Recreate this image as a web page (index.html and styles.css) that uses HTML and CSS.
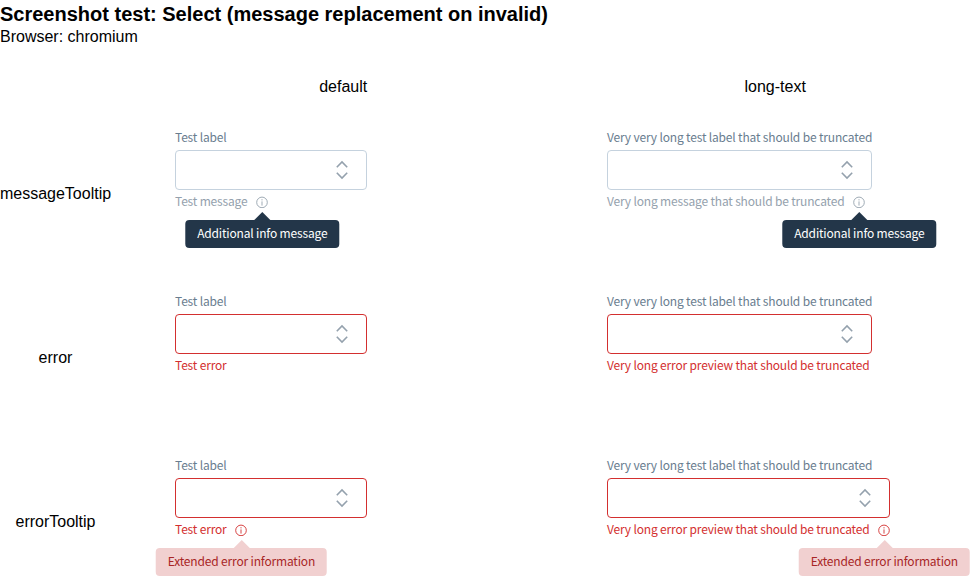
FILE: index.html
```html
<!DOCTYPE html>
<html lang="en">
<head>
<meta charset="utf-8">
<title>Select</title>
<link rel="stylesheet" href="styles.css">
</head>
<body>
<svg width="0" height="0" class="defs">
  <symbol id="arrows" viewBox="0 0 12 20"><path d="M.8 7.2 6 2l5.2 5.2M.8 12.8 6 18l5.2-5.2"/></symbol>
  <symbol id="info" viewBox="0 0 12 12"><circle cx="6" cy="6.4" r="5.3"/><path d="M6 5.4v4.2M6 3.2v1.2"/></symbol>
</svg>
<h1>Screenshot test: Select (message replacement on invalid)</h1>
<p class="browser">Browser: chromium</p>
<main class="matrix">
  <div></div>
  <div class="column-name">default</div>
  <div class="column-name">long-text</div>

  <div class="row-name">messageTooltip</div>
  <div class="cell">
    <div class="field short">
      <div class="label">Test label</div>
      <div class="select"><svg class="arrows"><use href="#arrows"/></svg></div>
      <div class="message">Test message<span class="hint"><svg class="info"><use href="#info"/></svg><span class="tooltip">Additional info message</span></span></div>
    </div>
  </div>
  <div class="cell">
    <div class="field long">
      <div class="label">Very very long test label that should be truncated</div>
      <div class="select"><svg class="arrows"><use href="#arrows"/></svg></div>
      <div class="message">Very long message that should be truncated<span class="hint"><svg class="info"><use href="#info"/></svg><span class="tooltip">Additional info message</span></span></div>
    </div>
  </div>

  <div class="row-name">error</div>
  <div class="cell">
    <div class="field short invalid">
      <div class="label">Test label</div>
      <div class="select"><svg class="arrows"><use href="#arrows"/></svg></div>
      <div class="message">Test error</div>
    </div>
  </div>
  <div class="cell">
    <div class="field long invalid">
      <div class="label">Very very long test label that should be truncated</div>
      <div class="select"><svg class="arrows"><use href="#arrows"/></svg></div>
      <div class="message">Very long error preview that should be truncated</div>
    </div>
  </div>

  <div class="row-name">errorTooltip</div>
  <div class="cell">
    <div class="field short invalid">
      <div class="label">Test label</div>
      <div class="select"><svg class="arrows"><use href="#arrows"/></svg></div>
      <div class="message">Test error<span class="hint"><svg class="info"><use href="#info"/></svg><span class="tooltip">Extended error information</span></span></div>
    </div>
  </div>
  <div class="cell">
    <div class="field wide invalid">
      <div class="label">Very very long test label that should be truncated</div>
      <div class="select"><svg class="arrows"><use href="#arrows"/></svg></div>
      <div class="message">Very long error preview that should be truncated<span class="hint"><svg class="info"><use href="#info"/></svg><span class="tooltip">Extended error information</span></span></div>
    </div>
  </div>
</main>
</body>
</html>
```
FILE: styles.css
```css
* { box-sizing: border-box; }
html { overflow: hidden; }
body {
  margin: 0;
  height: 588px;
  overflow: hidden;
  background: #fff;
  color: #000;
  font: 16px/18px "Liberation Sans", Arial, sans-serif;
}
.defs { position: absolute; }
h1 {
  margin: 0;
  padding-top: 3px;
  font-size: 20px;
  line-height: 23px;
}
.browser { margin: 2px 0 0; }
.matrix {
  display: grid;
  grid-template-columns: 111px 432px 432px;
  grid-template-rows: 50px repeat(3, 164px);
  margin-top: 16px;
}
.column-name {
  display: flex;
  align-items: center;
  justify-content: center;
  margin-left: 16.2px;
  margin-right: -16.2px;
}
.row-name {
  display: flex;
  align-items: center;
  justify-content: center;
}
.cell { padding: 16px 0 0 64px; }
.field {
  color: #697d8f;
  font: 12px/18px "Noto Sans CJK JP", sans-serif;
  letter-spacing: -.167px;
  white-space: nowrap;
}
.short { width: 192px; }
.long { width: 265px; }
.wide { width: 283px; }
.label { height: 22px; line-height: 17px; }
.select {
  display: flex;
  align-items: center;
  justify-content: flex-end;
  height: 40px;
  padding-right: 18px;
  border: 1px solid #c5d2de;
  border-radius: 4px;
}
.arrows {
  width: 12px;
  height: 20px;
  fill: none;
  stroke: #94a1ad;
  stroke-width: 1.6;
}
.message {
  display: flex;
  align-items: center;
  height: 18px;
  margin-top: 2px;
  color: #94a1ad;
}
.hint {
  position: relative;
  width: 12px;
  height: 12px;
  margin: 2px 0 0 8.8px;
}
.info {
  display: block;
  width: 12px;
  height: 12px;
  fill: none;
  stroke: currentColor;
  stroke-width: .9;
}
.tooltip {
  position: absolute;
  top: 24px;
  left: 50%;
  height: 28px;
  padding: 0 11.6px;
  border-radius: 4px;
  background: #233649;
  color: #fff;
  line-height: 26px;
  transform: translateX(-50%);
}
.tooltip::before {
  content: "";
  position: absolute;
  bottom: 100%;
  left: 50%;
  margin-left: -8px;
  border: 8px solid transparent;
  border-top: 0;
  border-bottom-color: #233649;
}
.invalid .select { border-color: #d32f2f; }
.invalid .message { color: #d32f2f; }
.invalid .tooltip { background: #f1d0d0; color: #a82626; }
.invalid .tooltip::before { border-bottom-color: #f1d0d0; }
```
